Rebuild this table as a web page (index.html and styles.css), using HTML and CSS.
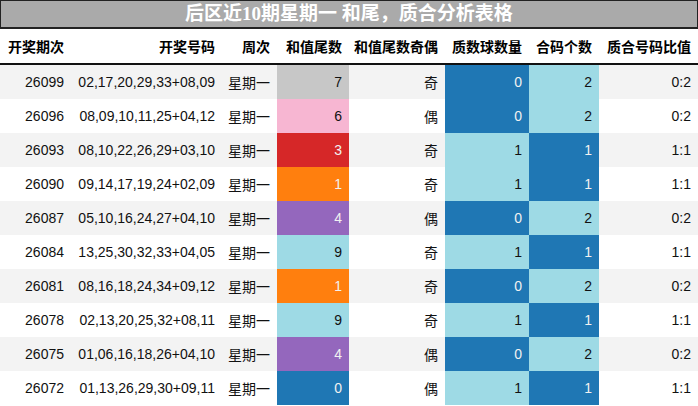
FILE: index.html
```html
<!DOCTYPE html>
<html lang="zh">
<head>
<meta charset="utf-8">
<link rel="stylesheet" href="styles.css">
</head>
<body>
<div class="title">后区近10期星期一 和尾，质合分析表格</div>
<table class="grid">
<colgroup>
<col class="c1"><col class="c2"><col class="c3"><col class="c4"><col class="c5"><col class="c6"><col class="c7"><col class="c8">
</colgroup>
<thead>
<tr><th>开奖期次</th><th>开奖号码</th><th>周次</th><th>和值尾数</th><th>和值尾数奇偶</th><th>质数球数量</th><th>合码个数</th><th>质合号码比值</th></tr>
</thead>
<tbody>
<tr><td>26099</td><td>02,17,20,29,33+08,09</td><td>星期一</td><td class="grey">7</td><td>奇</td><td class="blue">0</td><td class="lblue">2</td><td>0:2</td></tr>
<tr><td>26096</td><td>08,09,10,11,25+04,12</td><td>星期一</td><td class="pink">6</td><td>偶</td><td class="blue">0</td><td class="lblue">2</td><td>0:2</td></tr>
<tr><td>26093</td><td>08,10,22,26,29+03,10</td><td>星期一</td><td class="red">3</td><td>奇</td><td class="lblue">1</td><td class="blue">1</td><td>1:1</td></tr>
<tr><td>26090</td><td>09,14,17,19,24+02,09</td><td>星期一</td><td class="orange">1</td><td>奇</td><td class="lblue">1</td><td class="blue">1</td><td>1:1</td></tr>
<tr><td>26087</td><td>05,10,16,24,27+04,10</td><td>星期一</td><td class="purple">4</td><td>偶</td><td class="blue">0</td><td class="lblue">2</td><td>0:2</td></tr>
<tr><td>26084</td><td>13,25,30,32,33+04,05</td><td>星期一</td><td class="lblue">9</td><td>奇</td><td class="lblue">1</td><td class="blue">1</td><td>1:1</td></tr>
<tr><td>26081</td><td>08,16,18,24,34+09,12</td><td>星期一</td><td class="orange">1</td><td>奇</td><td class="blue">0</td><td class="lblue">2</td><td>0:2</td></tr>
<tr><td>26078</td><td>02,13,20,25,32+08,11</td><td>星期一</td><td class="lblue">9</td><td>奇</td><td class="lblue">1</td><td class="blue">1</td><td>1:1</td></tr>
<tr><td>26075</td><td>01,06,16,18,26+04,10</td><td>星期一</td><td class="purple">4</td><td>偶</td><td class="blue">0</td><td class="lblue">2</td><td>0:2</td></tr>
<tr><td>26072</td><td>01,13,26,29,30+09,11</td><td>星期一</td><td class="blue">0</td><td>偶</td><td class="lblue">1</td><td class="blue">1</td><td>1:1</td></tr>
</tbody>
</table>
</body>
</html>
```

FILE: styles.css
```css
html, body {
  margin: 0;
  padding: 0;
  background: #ffffff;
}
body {
  width: 698px;
  font-family: "Liberation Sans", "Noto Sans CJK SC", sans-serif;
  font-size: 14px;
  color: #111111;
}
.title {
  box-sizing: border-box;
  height: 29px;
  width: 698px;
  background: #aaaaaa;
  border: 1px solid #222222;
  border-bottom-width: 2px;
  color: #ffffff;
  font-family: "Liberation Serif", "Noto Sans CJK SC", serif;
  font-weight: bold;
  font-size: 19px;
  line-height: 26px;
  text-align: center;
}
.grid {
  width: 698px;
  table-layout: fixed;
  border-collapse: collapse;
  border-spacing: 0;
}
.c1 { width: 71px; }
.c2 { width: 151px; }
.c3 { width: 55px; }
.c4 { width: 72px; }
.c5 { width: 96px; }
.c6 { width: 84px; }
.c7 { width: 70px; }
.c8 { width: 99px; }
.grid th {
  height: 34px;
  padding: 0 7px 0 0;
  text-align: right;
  font-weight: bold;
  color: #000000;
  border-bottom: 2px solid #111111;
  white-space: nowrap;
}
.grid th:first-child {
  text-align: left;
  padding-left: 8px;
}
.grid td {
  height: 34px;
  padding: 0 7px 0 0;
  text-align: right;
  white-space: nowrap;
}
.grid tbody tr:nth-child(odd) td { background: #f3f3f3; }
.grid tbody tr:nth-child(odd) td.grey,
.grid td.grey { background: #c7c7c7; color: #111111; }
.grid tbody tr td.pink { background: #f7b6d2; color: #111111; }
.grid tbody tr td.red { background: #d62728; color: #f1f1f1; }
.grid tbody tr td.orange { background: #ff7f0e; color: #f1f1f1; }
.grid tbody tr td.purple { background: #9467bd; color: #f1f1f1; }
.grid tbody tr td.lblue { background: #9edae5; color: #111111; }
.grid tbody tr td.blue { background: #1f77b4; color: #f1f1f1; }
```
